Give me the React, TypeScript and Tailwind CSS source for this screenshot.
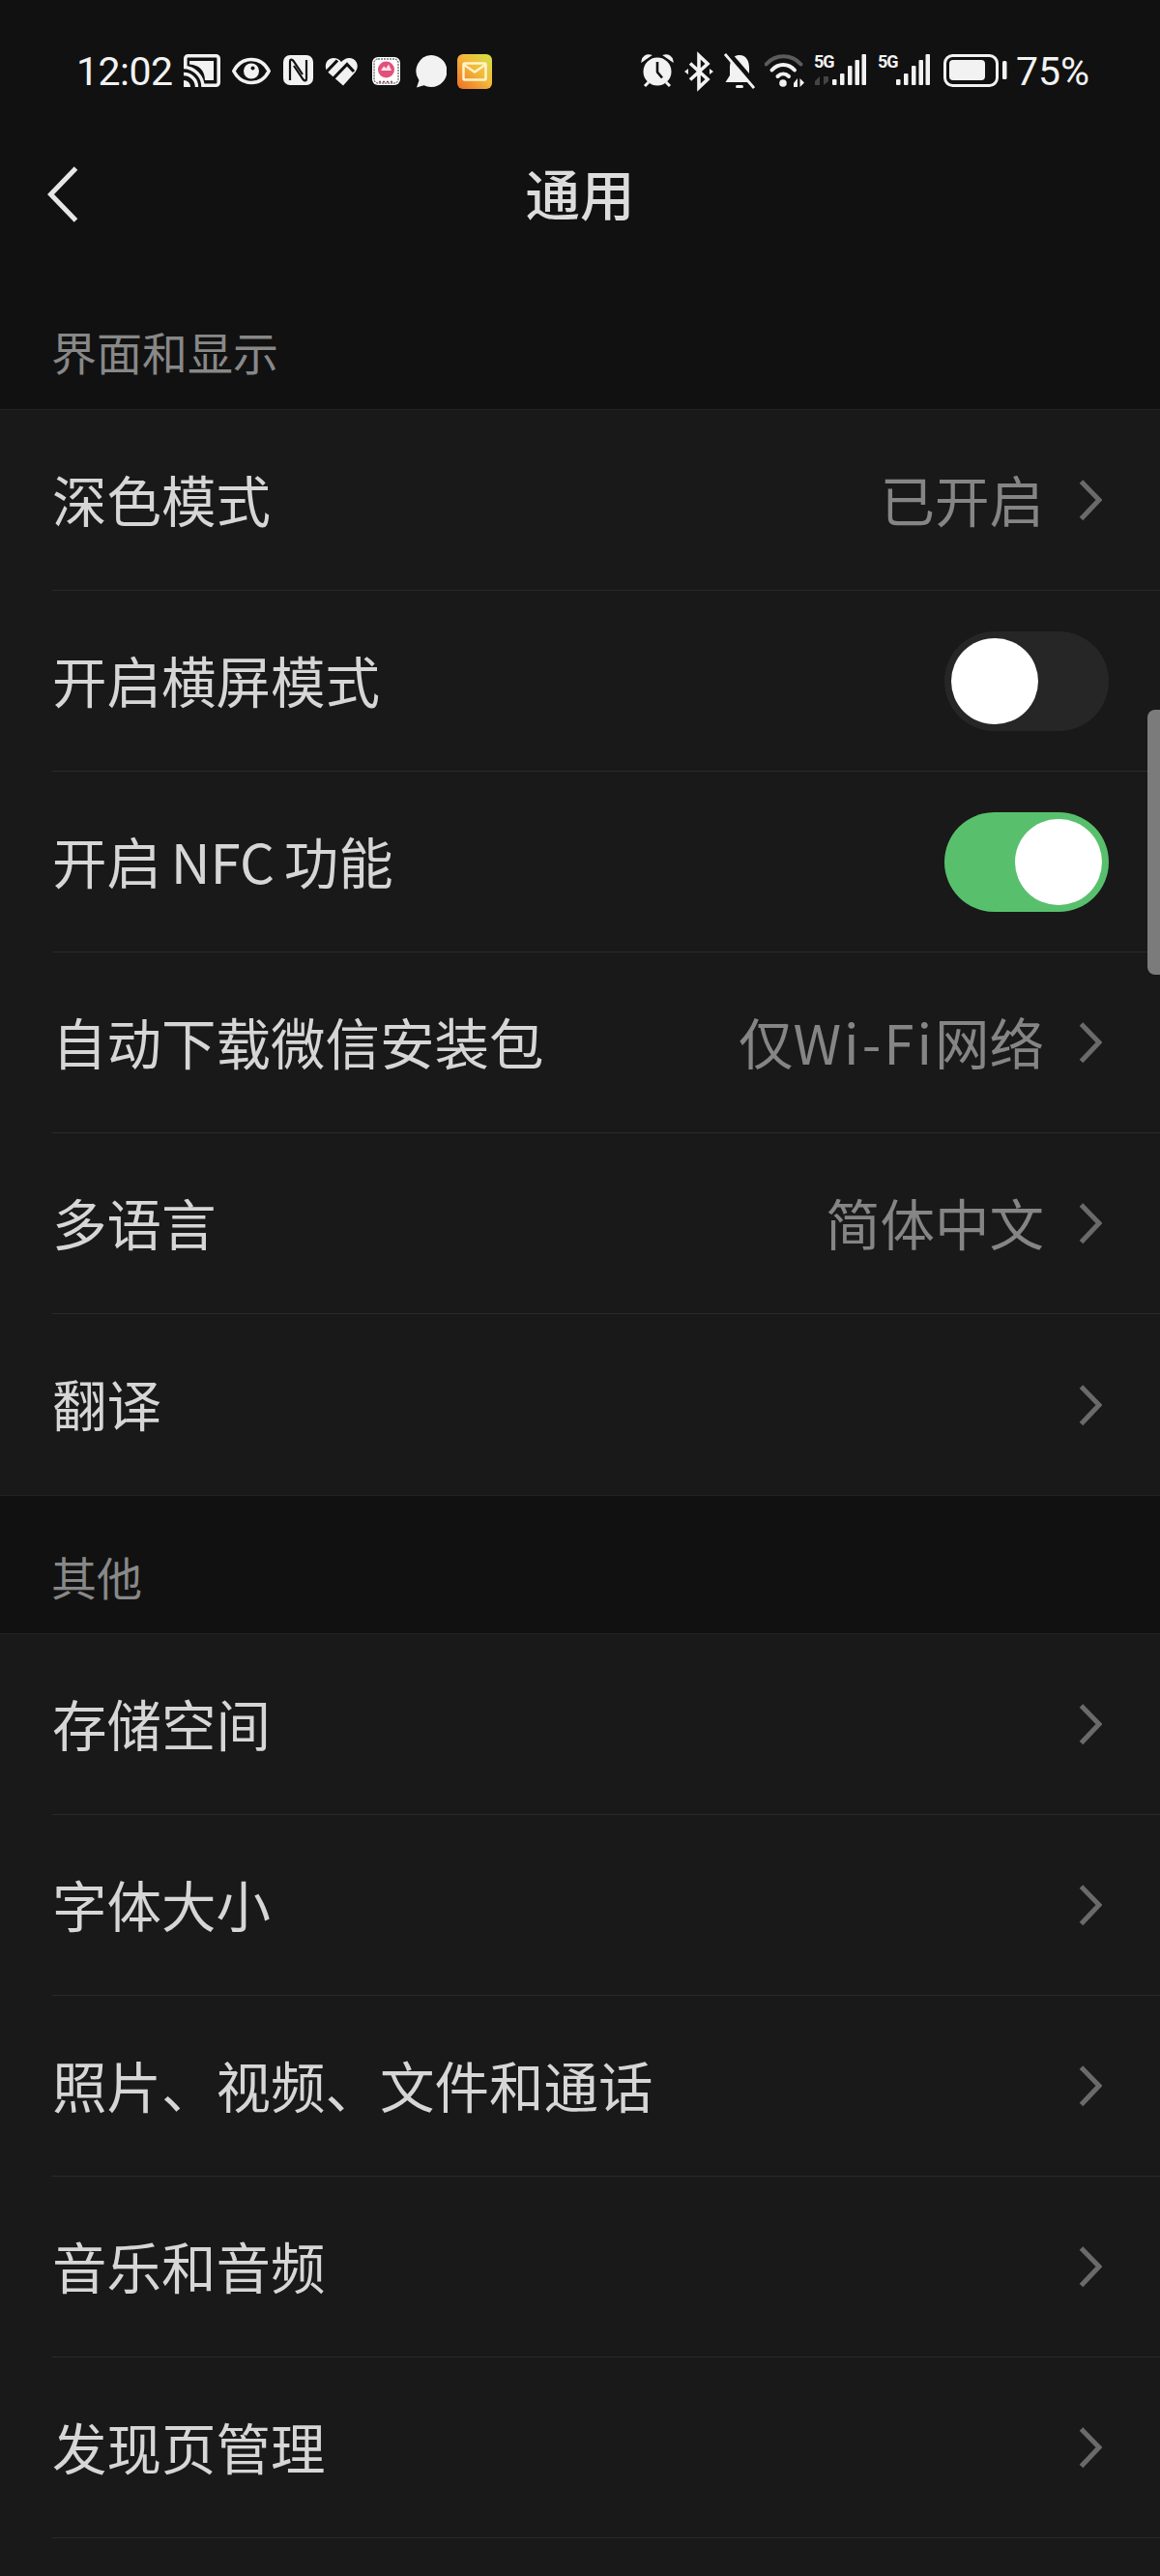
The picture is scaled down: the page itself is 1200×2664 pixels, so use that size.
import React from "react";

const W = "#f2f2f2";
const BG = "#111111";

function Chevron() {
  return (
    <svg width="24" height="44" viewBox="0 0 24 44" fill="none" className="shrink-0">
      <path d="M2.500 3L21 22L2.500 41.500" stroke="#6a6a6a" strokeWidth="5" />
    </svg>
  );
}

function Toggle({ on }: { on?: boolean }) {
  return (
    <div
      className={
        on
          ? "flex h-[103px] w-[170px] items-center justify-end rounded-full bg-[#58c06c] px-[7px]"
          : "flex h-[103px] w-[170px] items-center justify-start rounded-full bg-[#262626] px-[7px]"
      }
    >
      <div className="h-[89px] w-[90px] rounded-full bg-white" />
    </div>
  );
}

function Row({ label, value, toggle, chevron, last }: { label: string; value?: React.ReactNode; toggle?: "on" | "off"; chevron?: boolean; last?: boolean }) {
  return (
    <div className={last ? "flex h-[187px] items-center justify-between pl-[54px]" : "ml-[54px] flex h-[187px] items-center justify-between border-b border-[#2a2a2a]"}>
      <span className="pb-[4px] text-[56.500px] leading-none text-[#d6d6d6] [word-spacing:-3px]">{label}</span>
      {toggle ? (
        <div className="mr-[53px]">
          <Toggle on={toggle === "on"} />
        </div>
      ) : (
        <div className="mr-[60px] flex items-center gap-[36px]">
          {value ? <span className="pb-[4px] text-[56.500px] leading-none text-[#858585]">{value}</span> : null}
          {chevron ? <Chevron /> : null}
        </div>
      )}
    </div>
  );
}

function Signal({ arrows }: { arrows?: boolean }) {
  return (
    <svg width="54" height="44" viewBox="0 0 54 44" className="shrink-0">
      <text x="0" y="18" fontFamily="Roboto, sans-serif" fontWeight="700" fontSize="18" letterSpacing="-1" fill={W}>5G</text>
      {arrows ? (
        <g fill="#444444">
          <path d="M1 32L6 27V36H1Z" />
          <path d="M15 32L10 36V27H15Z" />
        </g>
      ) : null}
      <rect x="19" y="30" width="4.500" height="6" rx="1" fill={W} />
      <rect x="27" y="24" width="4.500" height="12" rx="1" fill={W} />
      <rect x="35" y="16" width="4.500" height="20" rx="1" fill={W} />
      <rect x="42.500" y="10" width="4.500" height="26" rx="1" fill={W} />
      <rect x="49.500" y="4" width="4.500" height="32" rx="1" fill={W} />
    </svg>
  );
}

function StatusBar() {
  return (
    <div className="flex h-[136px] items-start justify-between pl-[79px] pr-[73px] pt-[52px] font-['Roboto',sans-serif] text-[41px] leading-[44px] text-[#f2f2f2]">
      <div className="flex h-[44px] items-center">
        <span className="w-[111px] tracking-[-0.5px]">12:02</span>
        <svg width="38" height="44" viewBox="0 0 38 44" fill="none">
          <path d="M1.800 19V8.500A2.700 2.700 0 0 1 4.500 5.800H33.500A2.700 2.700 0 0 1 36.200 8.500V33.500A2.700 2.700 0 0 1 33.500 36.200H21" stroke={W} strokeWidth="3.600" />
          <path d="M6 11H31V31H22C22 21 16 15 6 14.500Z" fill={W} />
          <path d="M0 17.500C11 17.500 20 27 20 38" stroke={W} strokeWidth="3.400" />
          <path d="M0 24.500C7.500 24.500 13.500 30.500 13.500 38" stroke={W} strokeWidth="3.400" />
          <path d="M0 31V38H7C7 34 4 31 0 31Z" fill={W} />
        </svg>
        <svg width="40" height="44" viewBox="0 0 40 44" fill="none" className="ml-[12px]">
          <path d="M1.800 21.500C10 5.500 30 5.500 38.200 21.500C30 37.500 10 37.500 1.800 21.500Z" stroke={W} strokeWidth="3.600" />
          <circle cx="20" cy="21.500" r="8" fill={W} />
          <circle cx="21.500" cy="18.500" r="2" fill={BG} />
        </svg>
        <svg width="31" height="44" viewBox="0 0 31 44" fill="none" className="ml-[13px]">
          <rect x="0" y="5" width="31" height="31" rx="7" fill={W} />
          <path d="M7 31V11.500C7 9 9 9 10.500 11L20 25" stroke={BG} strokeWidth="2.200" />
          <path d="M24 10V29.500C24 32 22 32 20.500 30L11 16" stroke={BG} strokeWidth="2.200" />
        </svg>
        <svg width="34" height="44" viewBox="0 0 34 44" className="ml-[12px]">
          <path d="M19 36.500L2.500 22C-1.500 16 2 8 9 8C12.500 8 15 9.500 17 12C20 8.500 25 6.500 29.500 9C34.500 12 35 18 31.500 22.500Z" fill={W} />
          <path d="M0 24L13 10.500M8.500 29.500L23 14.500L30 22" fill="none" stroke={BG} strokeWidth="3.200" />
        </svg>
        <svg width="29" height="44" viewBox="0 0 29 44" className="ml-[15px]">
          <rect x="0" y="7" width="29" height="29" rx="6" fill="#ffffff" />
          <rect x="2" y="9" width="25" height="25" rx="4" fill="none" stroke="#333333" strokeWidth="1" strokeDasharray="2 1" />
          <circle cx="14.500" cy="20" r="8.500" fill="#e0527c" />
          <path d="M9 21L12 16.500L14.500 18.500L17 14.500L20 21Z" fill="#ffe3ea" />
          <path d="M7 32.500H22" stroke="#884455" strokeWidth="1.500" strokeDasharray="2 2" />
        </svg>
        <svg width="34" height="44" viewBox="0 0 34 44" className="ml-[14px]">
          <path d="M18 5A16.500 16.500 0 1 1 10.500 36.200L3 38.500L5.500 31A16.500 16.500 0 0 1 18 5Z" fill={W} />
        </svg>
        <svg width="36" height="44" viewBox="0 0 36 44" fill="none" className="ml-[11px]">
          <defs>
            <linearGradient id="mailg" x1="0" y1="1" x2="1" y2="0">
              <stop offset="0" stopColor="#ee6f28" />
              <stop offset="0.55" stopColor="#f3b93a" />
              <stop offset="1" stopColor="#cfe247" />
            </linearGradient>
          </defs>
          <rect x="0" y="4" width="36" height="36" rx="6" fill="url(#mailg)" />
          <rect x="6.500" y="13.500" width="23" height="17" rx="1" stroke="#fff3c8" strokeWidth="2.500" />
          <path d="M7 15L18 22.500L29 15" stroke="#fff3c8" strokeWidth="2.500" />
        </svg>
      </div>
      <div className="flex h-[44px] items-center">
        <svg width="34" height="44" viewBox="0 0 34 44" fill="none">
          <path d="M1.500 11C2 7 6 4.500 9.500 5.500L1.500 11Z" fill={W} stroke={W} strokeWidth="2" />
          <path d="M32.500 11C32 7 28 4.500 24.500 5.500L32.500 11Z" fill={W} stroke={W} strokeWidth="2" />
          <circle cx="17" cy="22" r="14.500" fill={W} />
          <path d="M17 12V22.500L22 28.500" stroke={BG} strokeWidth="2.600" />
          <path d="M8 33L4 37M26 33L30 37" stroke={W} strokeWidth="3" />
        </svg>
        <svg width="30" height="44" viewBox="0 0 30 44" fill="none" className="ml-[11px]">
          <path d="M6 13.500L24 30L15 38.500V5.500L24 14L6 30.500" stroke={W} strokeWidth="3.600" />
          <path d="M0 22L4 19V25Z M30 22L26 19V25Z" fill={W} />
        </svg>
        <svg width="32" height="44" viewBox="0 0 32 44" fill="none" className="ml-[11px]">
          <path d="M16 5C9 5 6 11 6 18V26L1.500 33H30.500L26 26V18C26 11 23 5 16 5Z" fill={W} />
          <rect x="12" y="36" width="8" height="3" rx="1.500" fill={W} />
          <path d="M4 3L35 39" stroke={BG} strokeWidth="6" />
          <path d="M1 4L31 39" stroke={W} strokeWidth="2.800" />
        </svg>
        <svg width="41" height="44" viewBox="0 0 41 44" fill="none" className="ml-[10px]">
          <path d="M1.500 14.500C11 3.500 28 3.500 37.500 14.500" stroke="#5c5c5c" strokeWidth="4" strokeLinecap="round" />
          <path d="M7.500 20.500C14 13 24.500 13 31 20.500" stroke={W} strokeWidth="4" strokeLinecap="round" />
          <path d="M13.500 27C17 23.500 21.500 23.500 25 27" stroke={W} strokeWidth="4" strokeLinecap="round" />
          <circle cx="19" cy="34" r="3.800" fill={W} />
          <path d="M30 34L34 29V38H30Z M41 33.500L36.500 38V29Z" fill={W} />
        </svg>
        <div className="ml-[10px] flex">
          <Signal arrows />
        </div>
        <div className="ml-[12px] flex">
          <Signal />
        </div>
        <svg width="66" height="44" viewBox="0 0 66 44" fill="none" className="ml-[14px]">
          <rect x="1.500" y="5.500" width="54" height="31" rx="8" stroke={W} strokeWidth="3" />
          <rect x="6" y="10" width="37" height="21" rx="4" fill={W} />
          <rect x="61" y="11" width="4.500" height="19" rx="1.500" fill={W} />
        </svg>
        <span className="ml-[9px]">75%</span>
      </div>
    </div>
  );
}

export default function App() {
  return (
    <div className="relative h-[2664px] w-[1200px] overflow-hidden bg-[#111111] font-['Noto_Sans_CJK_SC','Noto_Sans',sans-serif]">
      <StatusBar />
      <div className="relative flex h-[130px] items-center justify-center">
        <svg width="32" height="58" viewBox="0 0 32 58" fill="none" className="absolute left-[49px] top-[36px]">
          <path d="M29.500 2L3.500 29L29.500 56" stroke="#e6e6e6" strokeWidth="5" />
        </svg>
        <span className="pb-[6px] text-[56.500px] font-medium leading-none text-[#dcdcdc]">通用</span>
      </div>
      <div className="flex h-[157px] items-end pb-[37px] pl-[53px] text-[47px] leading-none text-[#888888]">界面和显示</div>
      <div className="border-y border-[#222222] bg-[#191919]">
        <Row label="深色模式" value="已开启" chevron />
        <Row label="开启横屏模式" toggle="off" />
        <Row label="开启 NFC 功能" toggle="on" />
        <Row label="自动下载微信安装包" value={<>仅<span className="tracking-[3px]">Wi-Fi</span>网络</>} chevron />
        <Row label="多语言" value="简体中文" chevron />
        <Row label="翻译" chevron last />
      </div>
      <div className="flex h-[142px] items-center pl-[53px] pt-[22px] text-[47px] leading-none text-[#888888]">其他</div>
      <div className="border-t border-[#222222] bg-[#191919]">
        <Row label="存储空间" chevron />
        <Row label="字体大小" chevron />
        <Row label="照片、视频、文件和通话" chevron />
        <Row label="音乐和音频" chevron />
        <Row label="发现页管理" chevron />
        <div className="h-[60px]" />
      </div>
      <div className="absolute right-0 top-[734px] h-[274px] w-[13px] rounded-l-[8px] bg-[#7b7b7b]" />
    </div>
  );
}
